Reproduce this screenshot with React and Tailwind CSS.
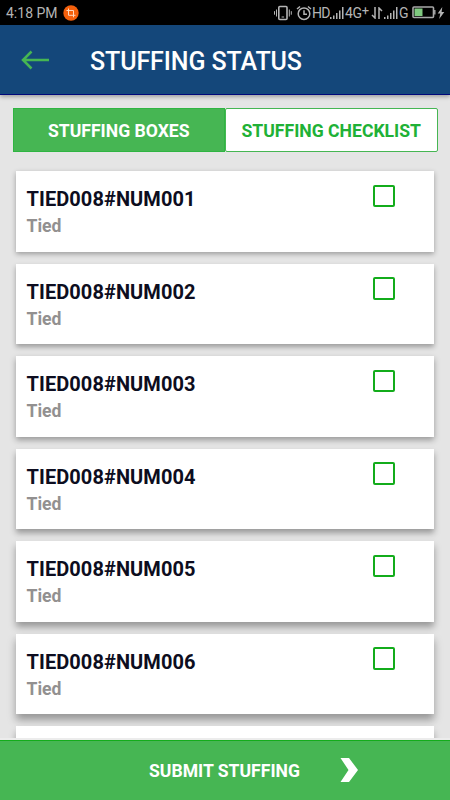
const boxes = [
  { id: 'TIED008#NUM001', shadow: 'shadow-[0_2px_5px_rgba(0,0,0,0.32)]' },
  { id: 'TIED008#NUM002', shadow: 'shadow-[0_3px_5px_rgba(0,0,0,0.32)]' },
  { id: 'TIED008#NUM003', shadow: 'shadow-[0_3px_6px_rgba(0,0,0,0.34)]' },
  { id: 'TIED008#NUM004', shadow: 'shadow-[0_4px_6px_rgba(0,0,0,0.34)]' },
  { id: 'TIED008#NUM005', shadow: 'shadow-[0_5px_7px_rgba(0,0,0,0.34)]' },
  { id: 'TIED008#NUM006', shadow: 'shadow-[0_6px_8px_rgba(0,0,0,0.34)]' },
];

function Signal() {
  return (
    <svg width="15" height="12" viewBox="0 0 15 12" fill="#b4b4b4" className="shrink-0">
      <path d="M0 10h1.5v2H0zM3 8.5h1.5V12H3zM6 6h1.5v6H6zM9 3.5h1.5V12H9zM12 0h1.5v12H12z" />
    </svg>
  );
}

function StatusBar() {
  return (
    <div className="flex h-[25px] shrink-0 items-center bg-black pl-[6px] pr-[5px] text-[#b4b4b4]">
      <span className="w-[52px] whitespace-nowrap text-[14px] leading-none">4:18 PM</span>
      <svg width="16" height="16" viewBox="0 0 16 16" fill="none" className="ml-[5px]">
        <circle cx="8" cy="8" r="7.7" fill="#f4600c" />
        <path d="M5.5 3.5v6.8h7M3.5 5.5h7v6.8" stroke="#ffd8bd" strokeWidth="1" />
      </svg>
      <div className="ml-auto flex items-center">
        <svg width="19" height="16" viewBox="0 0 19 16" fill="none" stroke="#b4b4b4">
          <rect x="4.8" y="1.5" width="8.2" height="13" rx="1" strokeWidth="1.6" />
          <path d="M2.5 4.5v7M.5 6.2v3.5M15.3 4.5v7M17.3 6.2v3.5" />
          <path d="M7.6 12h2.5" />
        </svg>
        <svg width="16" height="16" viewBox="0 0 16 16" fill="none" stroke="#b4b4b4" className="ml-[3px]">
          <circle cx="8" cy="8.7" r="5.8" strokeWidth="1.5" />
          <path d="M8 5.2v4h3M1 4l3-2.5M15 4l-3-2.5" strokeWidth="1.5" />
        </svg>
        <span className="w-[18px] whitespace-nowrap text-[14px] leading-none tracking-[-0.8px]">HD</span>
        <Signal />
        <span className="flex w-[26px] whitespace-nowrap text-[14px] leading-none tracking-[-0.3px]">
          4G<span className="-mt-[2px] text-[13px]">+</span>
        </span>
        <svg width="12" height="12" viewBox="0 0 12 12" fill="none" stroke="#b4b4b4" strokeWidth="1.5">
          <path d="M4 0v11L1 8M8 12V1l3 3" />
        </svg>
        <span className="ml-px flex"><Signal /></span>
        <span className="w-[13px] text-[14px] leading-none">G</span>
        <svg width="24" height="13" viewBox="0 0 24 13" fill="none">
          <rect x="1" y="1" width="20.5" height="10.5" rx="1" stroke="#a8a8a8" strokeWidth="1.6" />
          <path d="M2.5 2.5h8v7.5h-8z" fill="#7fc97f" />
          <path d="M22.8 4v4.5" stroke="#a8a8a8" strokeWidth="1.4" />
        </svg>
        <svg width="8" height="12" viewBox="0 0 8 12" fill="#b4b4b4" className="ml-px">
          <path d="M5.3 0L.7 6.6h2.6L2.2 12l5.1-7H4.6z" />
        </svg>
      </div>
    </div>
  );
}

function BoxCard({ id, shadow }) {
  return (
    <div className={`flex h-[80.5px] shrink-0 justify-between bg-white pl-[10.5px] pr-[39px] ${shadow}`}>
      <div className="pt-[17px]">
        <div className="whitespace-nowrap text-[20px] font-bold leading-[23px] tracking-[0.08px] text-[#0d0d20]">{id}</div>
        <div className="mt-[5px] text-[17.6px] font-bold leading-[21px] text-[#929090]">Tied</div>
      </div>
      <div className="mt-[13.5px] size-[22.5px] rounded-[2px] border-2 border-[#13ac1b]" />
    </div>
  );
}

export default function App() {
  return (
    <div className="flex h-[800px] w-[450px] flex-col overflow-hidden bg-[#e5e5e5] font-['Roboto',sans-serif]">
      <StatusBar />
      <header className="z-10 flex h-[70px] shrink-0 items-center border-b border-[#00087a] bg-[#14477a] pl-[21px] shadow-[0_2px_4px_rgba(0,0,0,0.3)]">
        <svg width="28" height="20" viewBox="0 0 28 20" fill="none" stroke="#46b653" strokeWidth="2.5">
          <path d="M28 10H2M10.5 1.5L2 10l8.5 8.5" />
        </svg>
        <h1 className="ml-[41px] whitespace-nowrap pt-[3px] text-[25px] font-medium leading-none tracking-[-0.1px] text-white">STUFFING STATUS</h1>
      </header>
      <div className="mx-[12.5px] mt-[13px] flex h-[44px] shrink-0 text-[17.6px] font-bold">
        <div className="flex w-[212.5px] items-center justify-center border border-[#2fb542] bg-[#46b653] pt-[2px] text-white">STUFFING BOXES</div>
        <div className="flex flex-1 items-center justify-center rounded-[2px] border border-[#46b653] bg-white pt-[2px] text-[#20b136]">STUFFING CHECKLIST</div>
      </div>
      <main className="flex min-h-0 flex-1 flex-col gap-[12px] overflow-hidden px-4 pt-[19px]">
        {boxes.map((box) => <BoxCard key={box.id} {...box} />)}
        <div className="h-[80.5px] shrink-0 bg-white shadow-[0_6px_7px_rgba(0,0,0,0.3)]" />
      </main>
      <div className="h-[2px] shrink-0 bg-[#ececec]" />
      <footer className="flex h-[60px] shrink-0 items-center border-t border-[#13ac1b] bg-[#46b653] pl-[149px] text-white">
        <span className="w-[191px] whitespace-nowrap pt-px text-[17.6px] font-bold">SUBMIT STUFFING</span>
        <svg width="18" height="24" viewBox="0 0 18 24" fill="white" className="-mt-px">
          <path d="M.5 0H9l9 12-9 12H.5l8-12z" />
        </svg>
      </footer>
    </div>
  );
}
